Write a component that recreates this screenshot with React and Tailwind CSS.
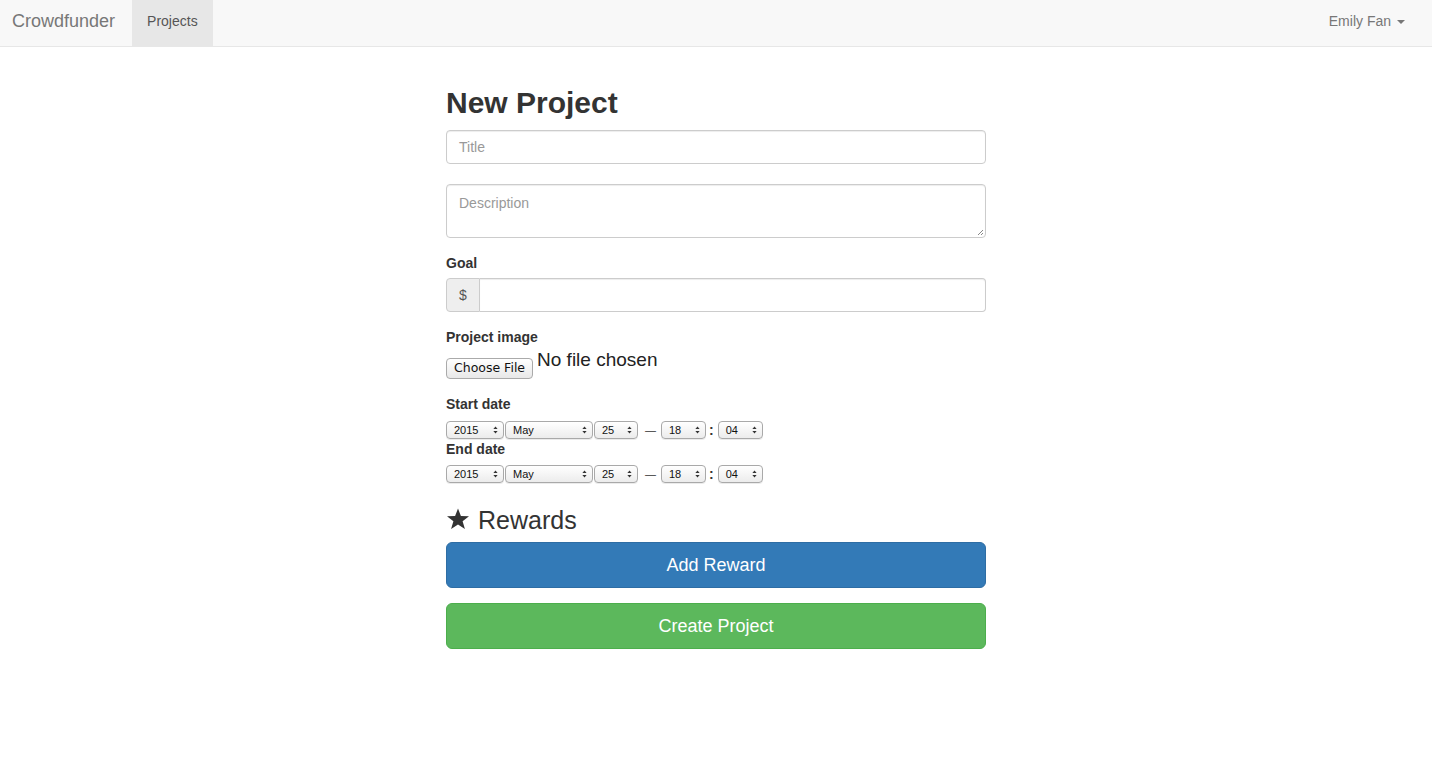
import React from "react";

function Arrows() {
  return (
    <svg width="5" height="8" viewBox="0 0 5 8" className="shrink-0">
      <path d="M2.5 0.5 L4.6 3 L0.4 3 Z" fill="#333" />
      <path d="M2.5 7.5 L4.6 5 L0.4 5 Z" fill="#333" />
    </svg>
  );
}

function Sel({ w, label }) {
  return (
    <div
      className="h-[18px] border border-[#a9a9a9] rounded-[4px] bg-gradient-to-b from-white to-[#ececec] flex items-center justify-between pl-[7px] pr-[5px] text-[11px] text-[#111] shadow-[0_1px_0_rgba(0,0,0,0.08)]"
      style={{ width: w }}
    >
      <span className="leading-none">{label}</span>
      <Arrows />
    </div>
  );
}

function DateRow() {
  return (
    <div className="flex items-center h-[18px]">
      <Sel w={58} label="2015" />
      <div className="w-[1px]" />
      <Sel w={88} label="May" />
      <div className="w-[1px]" />
      <Sel w={44} label="25" />
      <span className="ml-[7px] mr-[5px] text-[11px] text-[#333] leading-none">—</span>
      <Sel w={45} label="18" />
      <span className="ml-[3px] mr-[4px] text-[14px] text-[#333] font-bold leading-none">:</span>
      <Sel w={45} label="04" />
    </div>
  );
}

export default function App() {
  return (
    <div className="min-h-[768px] bg-white text-[#333] text-[14px]" style={{ fontFamily: '"Liberation Sans", Arial, sans-serif' }}>
      <nav className="h-[47px] bg-[#f8f8f8] border-b border-[#e7e7e7] flex items-stretch">
        <div className="flex items-center pb-[3px] pl-[12px] pr-[17px] text-[18px] text-[#777]">Crowdfunder</div>
        <div className="flex items-center pb-[3px] px-[15px] bg-[#e7e7e7] text-[#555] text-[14px]">Projects</div>
        <div className="flex-1" />
        <div className="flex items-center pb-[3px] pr-[27px] text-[#777] text-[14px]">
          Emily Fan
          <svg width="8" height="4" viewBox="0 0 8 4" className="ml-[6px]">
            <path d="M0 0 L8 0 L4 4 Z" fill="#777" />
          </svg>
        </div>
      </nav>

      <div className="w-[540px] mx-auto pt-[38px]">
        <h1 className="text-[30px] font-bold leading-[36px] mb-[9px] text-[#333]">New Project</h1>

        <div className="h-[34px] border border-[#ccc] rounded-[4px] px-[12px] flex items-center text-[#999] shadow-[inset_0_1px_1px_rgba(0,0,0,0.075)]">
          Title
        </div>

        <div className="mt-[20px] h-[54px] border border-[#ccc] rounded-[4px] px-[12px] pt-[8px] text-[#999] shadow-[inset_0_1px_1px_rgba(0,0,0,0.075)] relative">
          Description
          <svg width="7" height="7" viewBox="0 0 7 7" className="absolute right-[1px] bottom-[1px]">
            <path d="M6 1 L1 6 M6 4 L4 6" stroke="#888" strokeWidth="1" />
          </svg>
        </div>

        <div className="mt-[15px] font-bold leading-[20px]">Goal</div>
        <div className="mt-[5px] h-[34px] flex">
          <div className="w-[34px] bg-[#eee] border border-[#ccc] rounded-l-[4px] flex items-center justify-center text-[#555]">$</div>
          <div className="flex-1 border border-l-0 border-[#ccc] rounded-r-[4px] shadow-[inset_0_1px_1px_rgba(0,0,0,0.075)]" />
        </div>

        <div className="mt-[15px] font-bold leading-[20px]">Project image</div>
        <div className="mt-[1px] flex items-start">
          <div className="mt-[10px] h-[21px] px-[7px] border border-[#aaa] rounded-[4px] bg-gradient-to-b from-white to-[#e8e8e8] flex items-center text-[#111]" style={{ fontFamily: '"DejaVu Sans", sans-serif', fontSize: '12.5px' }}>
            Choose File
          </div>
          <span className="ml-[4px] text-[19px] leading-[24px] text-[#222]">No file chosen</span>
        </div>

        <div className="mt-[15px] font-bold leading-[20px]">Start date</div>
        <div className="mt-[7px]"><DateRow /></div>
        <div className="mt-[0px] font-bold leading-[20px]">End date</div>
        <div className="mt-[6px]"><DateRow /></div>

        <div className="mt-[23px] flex items-center text-[25px] leading-[28px] text-[#333]">
          <svg width="24" height="24" viewBox="0 0 24 24" className="mr-[8px] mb-[3px]">
            <path d="M12 1.5 L14.9 9 L23 9.2 L16.6 14.2 L18.9 22 L12 17.5 L5.1 22 L7.4 14.2 L1 9.2 L9.1 9 Z" fill="#333" />
          </svg>
          Rewards
        </div>

        <div className="mt-[8px] h-[46px] bg-[#337ab7] border border-[#2e6da4] rounded-[6px] flex items-center justify-center text-white text-[18px]">
          Add Reward
        </div>
        <div className="mt-[15px] h-[46px] bg-[#5cb85c] border border-[#4cae4c] rounded-[6px] flex items-center justify-center text-white text-[18px]">
          Create Project
        </div>
      </div>
    </div>
  );
}
